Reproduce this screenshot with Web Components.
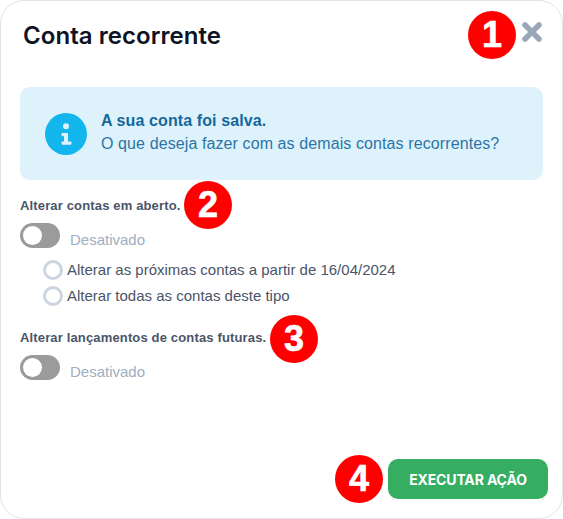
<!DOCTYPE html>
<html lang="pt-BR">
<head>
<meta charset="utf-8">
<title>Conta recorrente</title>
<style>
  html, body { margin: 0; background: #fff; }
  body { font-family: "Liberation Sans", Arial, sans-serif; }
</style>
</head>
<body>
<recurring-modal>
  <span slot="title">Conta recorrente</span>
  <info-alert>
    <span slot="title">A sua conta foi salva.</span>
    O que deseja fazer com as demais contas recorrentes?
  </info-alert>
  <option-group label="Alterar contas em aberto.">
    <radio-option>Alterar as próximas contas a partir de 16/04/2024</radio-option>
    <radio-option>Alterar todas as contas deste tipo</radio-option>
  </option-group>
  <option-group label="Alterar lançamentos de contas futuras."></option-group>
  <span slot="action">EXECUTAR AÇÃO</span>
  <step-badge slot="badges" style="left:467px;top:10px">1</step-badge>
  <step-badge slot="badges" style="left:183px;top:180px">2</step-badge>
  <step-badge slot="badges" style="left:269px;top:314px">3</step-badge>
  <step-badge slot="badges" style="left:334px;top:454px">4</step-badge>
</recurring-modal>

<script>
class RecurringModal extends HTMLElement {
  constructor() {
    super();
    this.attachShadow({ mode: "open" });
    this.shadowRoot.innerHTML = `
      <style>
        :host {
          display: flex;
          flex-direction: column;
          position: relative;
          box-sizing: border-box;
          width: 563px;
          height: 519px;
          padding: 0 19px 19px 19px;
          background: #fff;
          border: 1px solid #e2e2e2;
          border-radius: 24px;
        }
        header {
          display: flex;
          justify-content: space-between;
          align-items: flex-start;
          height: 86px;
          color: #0f1324;
        }
        h1 {
          margin: 20px 0 0 3px;
          font: 600 24px/30px "Inter", "Noto Sans", sans-serif;
          letter-spacing: 0.05px;
        }
        button.close {
          border: 0;
          padding: 0;
          margin: 19px -1px 0 0;
          background: none;
          width: 24px;
          height: 24px;
        }
        main { flex: 1; }
        footer { display: flex; justify-content: flex-end; margin-right: -5px; }
        button.go {
          width: 160px;
          height: 40px;
          border: 0;
          border-radius: 10px;
          background: #36ae62;
          color: #fff;
          font: 700 14px "Inter", "Noto Sans", sans-serif;
          letter-spacing: -0.15px;
        }
      </style>
      <header>
        <h1><slot name="title"></slot></h1>
        <button class="close" aria-label="Fechar">
          <svg width="24" height="24" viewBox="0 0 24 24">
            <path d="M5 5 L19 19 M19 5 L5 19" stroke="#9aa5b8" stroke-width="5.5" stroke-linecap="round" fill="none"/>
          </svg>
        </button>
      </header>
      <main><slot></slot></main>
      <footer><button class="go"><slot name="action"></slot></button></footer>
      <slot name="badges"></slot>
    `;
  }
}

class InfoAlert extends HTMLElement {
  constructor() {
    super();
    this.attachShadow({ mode: "open" });
    this.shadowRoot.innerHTML = `
      <style>
        :host {
          display: flex;
          align-items: center;
          gap: 14px;
          box-sizing: border-box;
          width: 523px;
          height: 93px;
          padding: 0 25px;
          margin-bottom: 18px;
          background: #def2fb;
          border-radius: 10px;
          color: #2b75a6;
          font-size: 16px;
          line-height: 23px;
          letter-spacing: 0.1px;
        }
        svg { flex: none; }
        .text { padding-bottom: 3px; }
        strong { display: block; color: #14689d; }
      </style>
      <svg width="42" height="42" viewBox="0 0 42 42">
        <circle cx="21" cy="21" r="21" fill="#12b5ec"/>
        <circle cx="21" cy="13.3" r="3" fill="#def2fb"/>
        <path d="M17 20.5h5.5v8.5h3.5v2.2h-9v-2.2h2.5v-6.3h-2.5z" fill="#def2fb" stroke="#def2fb" stroke-width="1" stroke-linejoin="round"/>
      </svg>
      <div class="text"><strong><slot name="title"></slot></strong><slot></slot></div>
    `;
  }
}

class OptionGroup extends HTMLElement {
  constructor() {
    super();
    this.attachShadow({ mode: "open" });
    this.shadowRoot.innerHTML = `
      <style>
        :host { display: block; margin-bottom: 21px; }
        .label {
          font-size: 13px;
          line-height: 16px;
          font-weight: 700;
          letter-spacing: 0.15px;
          color: #4a5568;
          margin-bottom: 9px;
        }
        .row { display: flex; align-items: center; gap: 10px; height: 25px; }
        .toggle {
          box-sizing: border-box;
          width: 40px;
          height: 25px;
          padding: 3px;
          border-radius: 13px;
          background: #9b9b9b;
        }
        .toggle i { display: block; width: 19px; height: 19px; border-radius: 50%; background: #fff; }
        .state { font-size: 15px; color: #a0aec0; position: relative; top: 4px; }
        .options { padding: 9px 0 0 23px; }
      </style>
      <div class="label"></div>
      <div class="row">
        <div class="toggle"><i></i></div>
        <span class="state">Desativado</span>
      </div>
      <div class="options"><slot></slot></div>
    `;
    this.shadowRoot.querySelector(".label").textContent = this.getAttribute("label");
  }
}

class RadioOption extends HTMLElement {
  constructor() {
    super();
    this.attachShadow({ mode: "open" });
    this.shadowRoot.innerHTML = `
      <style>
        :host {
          display: flex;
          align-items: center;
          gap: 4px;
          height: 26px;
          font-size: 15px;
          color: #4a5568;
        }
        i {
          box-sizing: border-box;
          width: 20px;
          height: 20px;
          border: 3px solid #cbd5e0;
          border-radius: 50%;
        }
        span { padding-bottom: 2px; }
      </style>
      <i></i><span><slot></slot></span>
    `;
  }
}

class StepBadge extends HTMLElement {
  constructor() {
    super();
    this.attachShadow({ mode: "open" });
    this.shadowRoot.innerHTML = `
      <style>
        :host {
          position: absolute;
          display: flex;
          align-items: center;
          justify-content: center;
          width: 48px;
          height: 48px;
          border-radius: 50%;
          background: #ff0000;
          color: #fff;
          font: 700 36px "Liberation Sans", Arial, sans-serif;
          -webkit-text-stroke: 0.6px #fff;
        }
      </style>
      <slot></slot>
    `;
  }
}

customElements.define("recurring-modal", RecurringModal);
customElements.define("info-alert", InfoAlert);
customElements.define("option-group", OptionGroup);
customElements.define("radio-option", RadioOption);
customElements.define("step-badge", StepBadge);
</script>
</body>
</html>
